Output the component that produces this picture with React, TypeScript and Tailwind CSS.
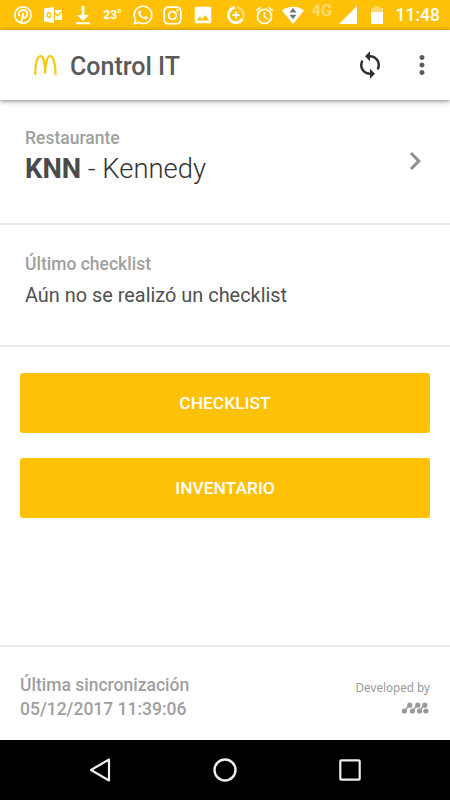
import { MdAccessAlarm, MdChevronRight, MdImage, MdMoreVert, MdSync } from 'react-icons/md'
import { FaInstagram, FaWhatsapp } from 'react-icons/fa'

function StatusBar() {
  return (
    <div className="flex h-[30px] items-center bg-[#ffc107] pl-[7.5px] text-white">
      <div className="flex w-[30px] justify-center">
        <svg width="20" height="20" viewBox="0 0 20 20" fill="none" stroke="currentColor">
          <circle cx="10" cy="10" r="8.2" strokeWidth="1.7" />
          <path d="M6.6 11.2C4.6 7.6 7.2 5 10.3 5c3 0 4.4 2 4 4.4-.5 3.3-3.8 4.4-4.8 2.2" strokeWidth="1.9" />
          <path d="M10.3 8 8.1 17.5" strokeWidth="2" />
        </svg>
      </div>
      <div className="flex w-[30px] justify-center">
        <svg width="20" height="18" viewBox="0 0 20 18">
          <path d="M1 2.5 11 1v16L1 15.5z" fill="currentColor" />
          <path d="M12 4h7v10h-7z" fill="currentColor" />
          <path d="m12 7 2.5 2.5L19 5.5" fill="none" stroke="#ffc107" strokeWidth="1.3" />
          <ellipse cx="6" cy="9" rx="1.7" ry="2.3" fill="none" stroke="#ffc107" strokeWidth="1.4" />
        </svg>
      </div>
      <div className="flex w-[30px] justify-center">
        <svg width="14" height="20" viewBox="0 0 14 20" fill="currentColor">
          <path d="M5.6 1h2.8v9H13l-6 6-6-6h4.6zM0 17.3h14v2H0z" />
        </svg>
      </div>
      <div className="w-[30px] text-center text-[12px] font-bold leading-none">23°</div>
      <div className="flex w-[30px] justify-center"><FaWhatsapp size={22} /></div>
      <div className="flex w-[30px] justify-center"><FaInstagram size={21} /></div>
      <div className="flex w-[30px] justify-center"><MdImage size={22} /></div>
      <div className="ml-1 flex w-[29px] justify-center">
        <svg width="20" height="20" viewBox="0 0 20 20" fill="none" stroke="currentColor">
          <path d="M9 2.5A7.6 7.6 0 1 0 16.5 14" strokeWidth="2.6" />
          <path d="M11 2.5A7.6 7.6 0 0 1 17 13" strokeWidth="2.6" opacity=".4" />
          <path d="M10 6.5v7M6.5 10h7" strokeWidth="2" />
        </svg>
      </div>
      <div className="flex w-7 justify-center"><MdAccessAlarm size={21} /></div>
      <div className="flex w-7 justify-center">
        <svg width="22" height="18" viewBox="0 0 22 18">
          <path d="M0 4.5C6-.5 16-.5 22 4.5L11 18z" fill="currentColor" />
          <path d="m11 2 3.5 4.5h-7zM11 13.3 7.5 8.8h7z" fill="#757575" />
        </svg>
      </div>
      <div className="-mt-2 ml-[5px] w-[21px] whitespace-nowrap text-[16.5px] font-bold leading-none opacity-40">4G</div>
      <svg className="ml-[6px]" width="18" height="18" viewBox="0 0 18 18" fill="currentColor">
        <path d="M18 0v18H0z" />
      </svg>
      <svg className="ml-[14px]" width="12" height="18" viewBox="0 0 12 18" fill="currentColor">
        <path d="M3.5 0h5v2H12v4H0V2h3.5z" opacity=".4" />
        <path d="M0 6h12v12H0z" />
      </svg>
      <div className="ml-[13px] pt-px text-[17.5px] font-medium leading-none">11:48</div>
    </div>
  )
}

function Header() {
  return (
    <header className="z-10 flex h-[70px] items-center bg-white shadow-[0_1px_5px_rgba(0,0,0,0.5)]">
      <svg className="ml-[33px]" width="24" height="22" viewBox="0 0 24 22" fill="none" stroke="#f7c80f" strokeWidth="2.2">
        <path d="M2.2 21C2.2 10 4.4 2 7.4 2s4.8 8 4.8 17.5C12.2 10 14.2 2 17.2 2s5.4 8 5.4 19" />
      </svg>
      <h1 className="ml-[13px] pt-0.5 text-[25px] font-medium leading-none text-[#5a5a5a]">Control IT</h1>
      <MdSync className="ml-auto text-[#303030]" size={30} />
      <MdMoreVert className="ml-[22px] mr-[13px] text-[#5a5a5a]" size={30} />
    </header>
  )
}

function DeveloperLogo() {
  return (
    <svg width="28" height="12" viewBox="0 0 28 12" fill="#999" stroke="#999">
      <path d="m3.5 9 5-6M11.5 9 16 3M18.5 9 23 3" fill="none" strokeWidth="1.4" />
      <g stroke="none">
        <circle cx="3.4" cy="9" r="2.6" />
        <circle cx="11.4" cy="9" r="2.6" />
        <circle cx="18.5" cy="9" r="2.6" />
        <circle cx="24.9" cy="9" r="2.6" />
        <circle cx="8.8" cy="3.2" r="2.6" />
        <circle cx="16.8" cy="3.2" r="2.6" />
        <circle cx="23.8" cy="3.2" r="2.6" />
      </g>
    </svg>
  )
}

function NavigationBar() {
  return (
    <nav className="flex h-[60px] items-center justify-between bg-black px-[89px]">
      <svg width="22" height="24" viewBox="0 0 22 24" fill="none" stroke="#eee" strokeWidth="2.2" strokeLinejoin="round">
        <path d="M20 1.5v21L2 12z" />
      </svg>
      <svg width="24" height="24" viewBox="0 0 24 24" fill="none" stroke="#eee" strokeWidth="2.4">
        <circle cx="12" cy="12" r="10.5" />
      </svg>
      <svg width="22" height="22" viewBox="0 0 22 22" fill="none" stroke="#eee" strokeWidth="2.2">
        <rect x="1.3" y="1.3" width="19.4" height="19.4" rx="1" />
      </svg>
    </nav>
  )
}

export default function App() {
  return (
    <div className="flex h-[800px] w-[450px] flex-col overflow-hidden bg-white font-['Roboto',sans-serif]">
      <StatusBar />
      <Header />
      <section className="flex h-[125px] items-start justify-between border-b-2 border-[#ebebeb] pl-[25px] pr-[17px] pt-7">
        <div>
          <p className="text-[17.5px] font-medium leading-5 text-[#9f9f9f]">Restaurante</p>
          <p className="mt-[5px] text-[27.4px] font-light leading-8 text-[#333]">
            <strong className="font-bold text-[#4a4a4a]">KNN</strong> - Kennedy
          </p>
        </div>
        <MdChevronRight className="mt-[15px] text-[#909090]" size={36} />
      </section>
      <section className="h-[122px] border-b-2 border-[#ebebeb] pl-[25px] pt-[29px]">
        <p className="text-[17.5px] font-medium leading-5 text-[#9f9f9f]">Último checklist</p>
        <p className="mt-2.5 text-[19.9px] leading-6 text-[#505050]">Aún no se realizó un checklist</p>
      </section>
      <main className="flex flex-1 flex-col gap-[25px] px-5 pt-[26px]">
        <button className="h-[60px] rounded-[3px] bg-[#ffc107] text-[17.4px] font-medium text-white">CHECKLIST</button>
        <button className="h-[60px] rounded-[3px] bg-[#ffc107] text-[17.4px] font-medium text-white">INVENTARIO</button>
      </main>
      <footer className="flex h-[95px] justify-between border-t-2 border-[#ebebeb] px-5 pt-[26px]">
        <div className="text-[17.5px] font-medium leading-6 text-[#9f9f9f]">
          <p>Última sincronización</p>
          <p>05/12/2017 11:39:06</p>
        </div>
        <div className="flex flex-col items-end pt-1.5">
          <p className="font-['Noto_Sans',sans-serif] text-[11.7px] leading-4 text-[#999]">Developed by</p>
          <div className="mr-px mt-[7px]"><DeveloperLogo /></div>
        </div>
      </footer>
      <NavigationBar />
    </div>
  )
}
